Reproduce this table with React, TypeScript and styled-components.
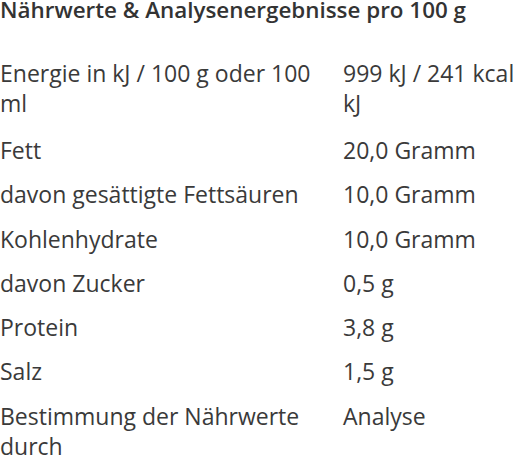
import React from "react";
import styled, { createGlobalStyle } from "styled-components";

const Global = createGlobalStyle`
  html, body { margin: 0; padding: 0; background: #ffffff; }
  body { font-family: "Open Sans", "DejaVu Sans", sans-serif; color: #3a3a3a; }
`;

const Wrapper = styled.div`
  width: 516px;
  display: flex;
  flex-direction: column;
`;

const Title = styled.h3`
  margin: 0;
  font-size: 22.4px;
  line-height: 20px;
  font-weight: 600;
  color: #333333;
  white-space: nowrap;
`;

const Table = styled.div`
  margin-top: 31px;
  display: grid;
  grid-template-columns: 343px 1fr;
`;

const Cell = styled.div<{ $value?: boolean; $tall?: boolean }>`
  font-size: 23px;
  line-height: 30px;
  padding: 7px ${(p) => (p.$value ? "0" : "20px")} ${(p) => (p.$tall ? "10px" : "7.3px")} 0;
  color: #3a3a3a;
`;

const rows: [string, string][] = [
  ["Energie in kJ / 100 g oder 100 ml", "999 kJ / 241 kcal kJ"],
  ["Fett", "20,0 Gramm"],
  ["davon gesättigte Fettsäuren", "10,0 Gramm"],
  ["Kohlenhydrate", "10,0 Gramm"],
  ["davon Zucker", "0,5 g"],
  ["Protein", "3,8 g"],
  ["Salz", "1,5 g"],
  ["Bestimmung der Nährwerte durch", "Analyse"],
];

export default function App() {
  return (
    <>
      <Global />
      <Wrapper>
        <Title>Nährwerte &amp; Analysenergebnisse pro 100 g</Title>
        <Table>
          {rows.map(([k, v], i) => (
            <React.Fragment key={k}>
              <Cell $tall={i === 0}>{k}</Cell>
              <Cell $value $tall={i === 0}>{v}</Cell>
            </React.Fragment>
          ))}
        </Table>
      </Wrapper>
    </>
  );
}
